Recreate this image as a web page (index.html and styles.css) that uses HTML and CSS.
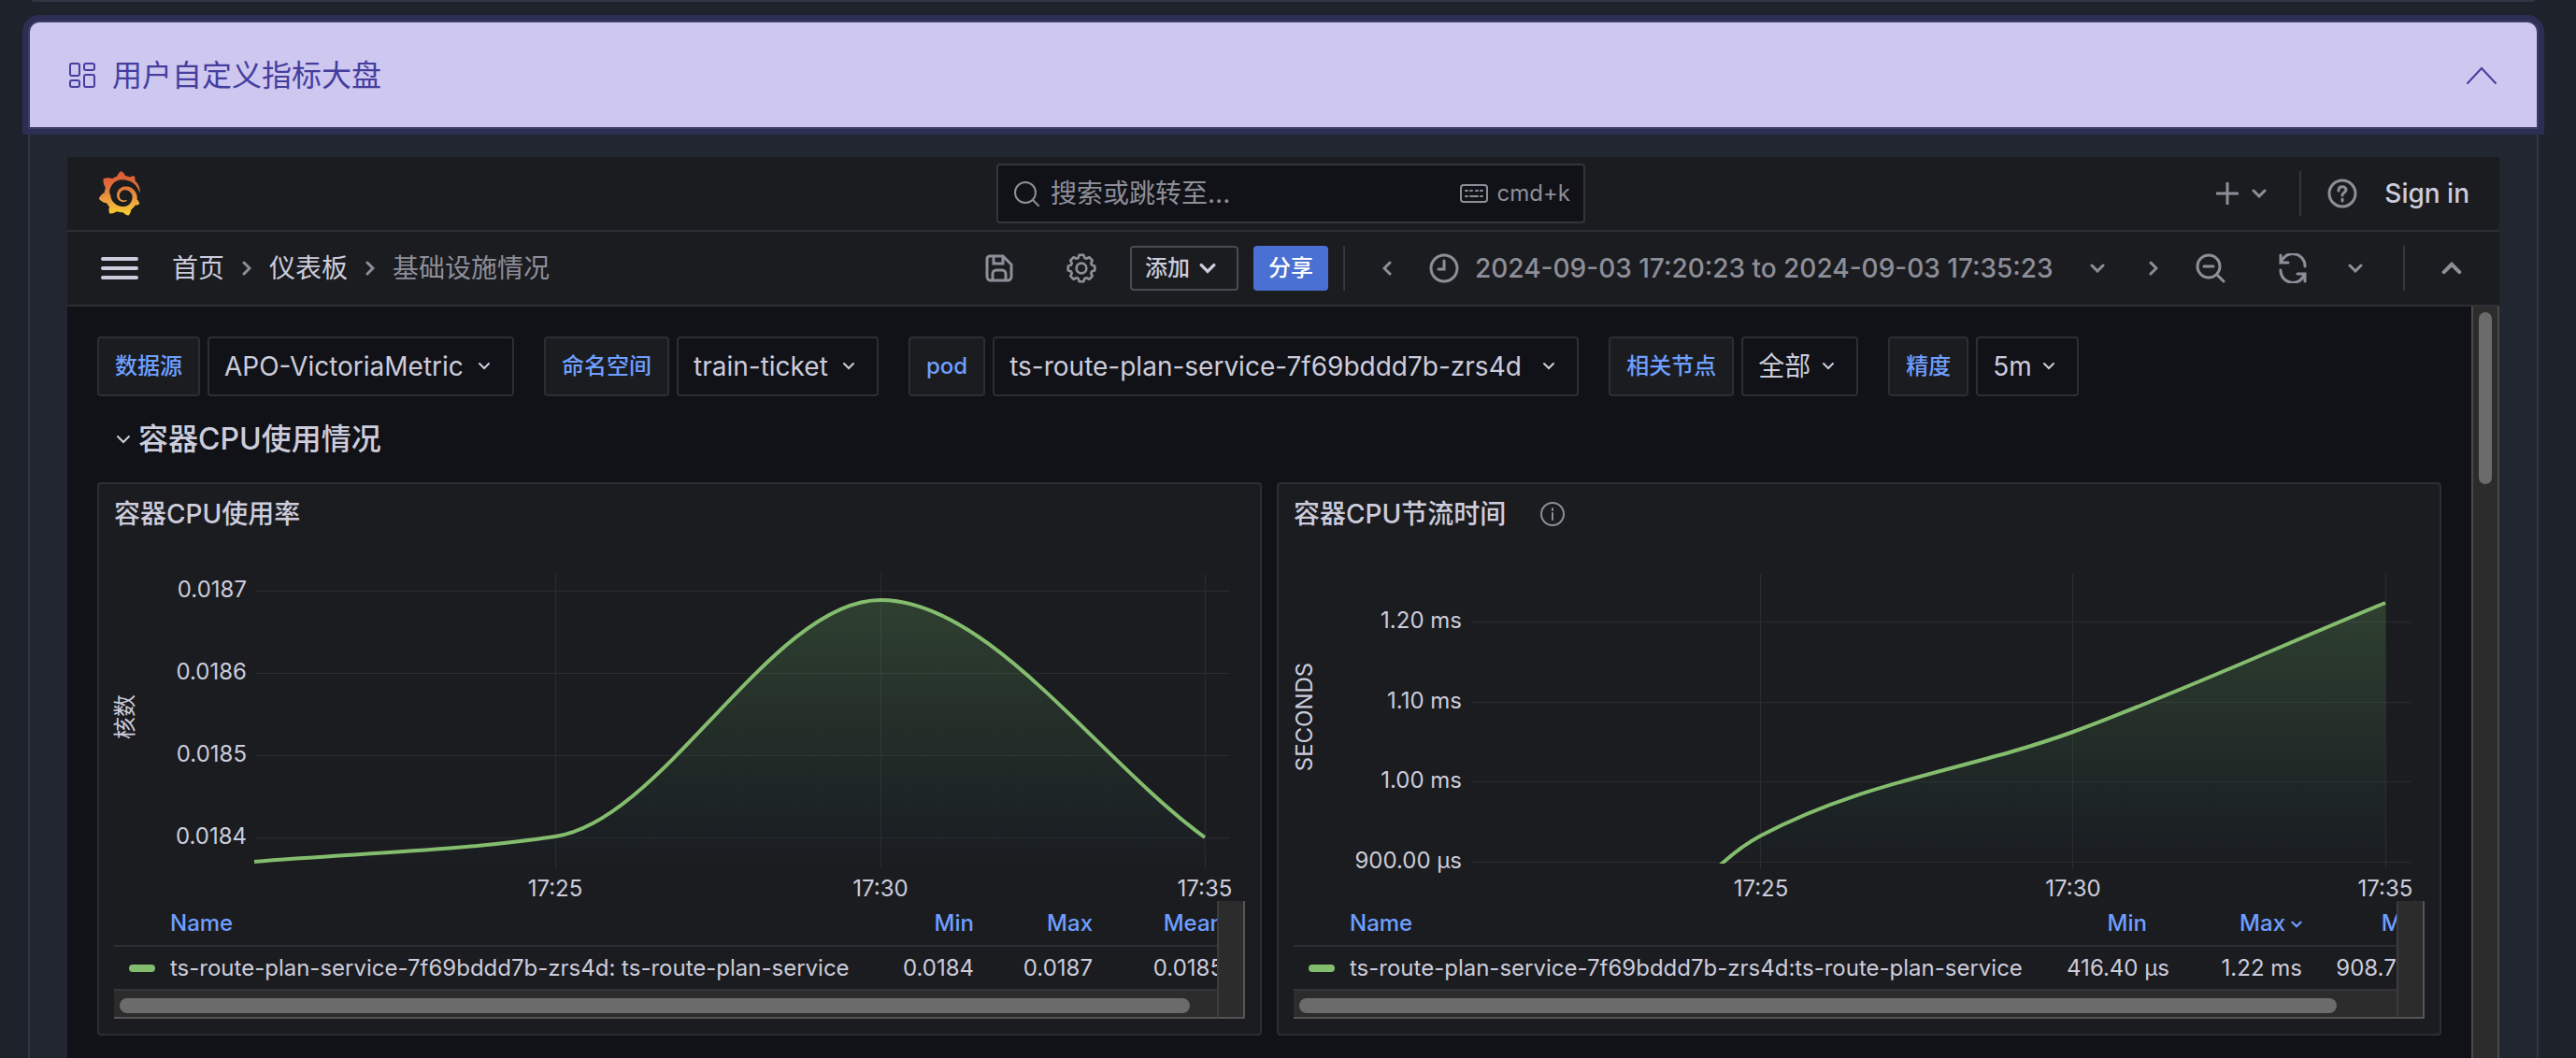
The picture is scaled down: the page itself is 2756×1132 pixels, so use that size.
FILE: index.html
```html
<!DOCTYPE html>
<html lang="zh-CN">
<head>
<meta charset="utf-8">
<title>用户自定义指标大盘</title>
<link rel="stylesheet" href="styles.css">
</head>
<body>
<svg class="sprite" aria-hidden="true">
  <symbol id="caret" viewBox="0 0 16 10"><path d="M2 2l6 6 6-6"/></symbol>
  <symbol id="angle" viewBox="0 0 10 16"><path d="M2 2l6 6-6 6"/></symbol>
</svg>
<main class="page">
  <div class="previous"></div>
  <section class="accordion">
    <h2 class="accordion-title">
      <button class="accordion-toggle" type="button" aria-expanded="true">
        <svg class="icon-grid" viewBox="0 0 28 28"><rect x="1" y="1" width="10" height="13" rx="2"/><rect x="16" y="1" width="11" height="7" rx="2"/><rect x="1" y="19" width="10" height="7" rx="2"/><rect x="16" y="13" width="11" height="13" rx="2"/></svg>
        <span>用户自定义指标大盘</span>
        <svg class="icon-fold" viewBox="0 0 34 20"><path d="M2 18L17 2l15 16"/></svg>
      </button>
    </h2>
    <div class="grafana">
      <header class="topbar">
        <a class="logo" href="#" aria-label="Grafana">
          <svg viewBox="0 0 86 93">
            <defs><linearGradient id="flame" x1="0" y1="1" x2="0" y2="0"><stop offset="0" stop-color="#f9d22c"/><stop offset=".3" stop-color="#eda63f"/><stop offset=".7" stop-color="#e0693a"/><stop offset="1" stop-color="#dc5a34"/></linearGradient></defs>
            <path fill="url(#flame)" d="M85.01,40.8c-0.14-1.55-0.41-3.35-0.93-5.32c-0.51-1.97-1.28-4.13-2.39-6.37c-1.12-2.24-2.57-4.57-4.47-6.82c-0.74-0.88-1.54-1.76-2.42-2.6c1.3-5.17-1.59-9.65-1.59-9.65c-4.98-0.31-8.14,1.54-9.31,2.39c-0.2-0.08-0.39-0.17-0.59-0.25c-0.85-0.34-1.72-0.66-2.61-0.95c-0.89-0.28-1.81-0.54-2.74-0.76c-0.94-0.22-1.89-0.4-2.86-0.55c-0.17-0.03-0.34-0.05-0.51-0.07C52.45,2.89,46.21,0,46.21,0c-6.95,4.41-8.27,10.57-8.27,10.57s-0.03,0.14-0.07,0.36c-0.38,0.11-0.77,0.22-1.15,0.34c-0.53,0.16-1.06,0.36-1.59,0.55c-0.53,0.21-1.06,0.41-1.58,0.64c-1.05,0.45-2.09,0.96-3.1,1.53c-0.99,0.55-1.95,1.16-2.9,1.82c-0.14-0.06-0.24-0.11-0.24-0.11c-9.62-3.68-18.17,0.75-18.17,0.75c-0.78,10.24,3.84,16.68,4.76,17.86c-0.23,0.63-0.44,1.28-0.64,1.93c-0.71,2.32-1.25,4.7-1.55,7.1c-0.04,0.34-0.09,0.68-0.12,1.03C2.68,48.76,0.06,57.4,0.06,57.4c7.42,8.53,16.08,9.06,16.08,9.06c1.1,1.96,2.37,3.83,3.82,5.56c0.6,0.73,1.23,1.43,1.88,2.1c-2.71,7.74,0.38,14.18,0.38,14.18c8.26,0.31,13.69-3.61,14.83-4.52c0.82,0.28,1.66,0.53,2.5,0.74c2.54,0.65,5.14,1.04,7.74,1.15c0.65,0.03,1.3,0.04,1.95,0.04l1.35-0.04c3.89,5.55,10.74,6.34,10.74,6.34c4.87-5.13,5.15-10.22,5.15-11.33l-0.01-0.45c1.02-0.72,2-1.49,2.92-2.31c1.95-1.76,3.65-3.77,5.06-5.93c0.13-0.2,0.26-0.41,0.39-0.62c5.51,0.32,9.39-3.41,9.39-3.41c-0.91-5.74-4.18-8.54-4.87-9.07c-0.07-0.05-0.15-0.1-0.25-0.17c0.03-0.35,0.06-0.69,0.08-1.04c0.04-0.62,0.06-1.24,0.06-1.85l0-0.97l-0.05-0.9c-0.01-0.18-0.02-0.34-0.04-0.5l-0.11-0.96l-0.07-0.47c-0.1-0.63-0.22-1.26-0.36-1.88c-0.58-2.47-1.54-4.82-2.82-6.93c-1.28-2.11-2.86-3.98-4.65-5.56c-1.79-1.58-3.79-2.85-5.9-3.79c-2.11-0.95-4.33-1.55-6.54-1.83c-1.11-0.14-2.21-0.2-3.3-0.19l-0.82,0.02l-0.4,0.03c-0.15,0.01-0.31,0.02-0.45,0.04c-0.56,0.05-1.11,0.13-1.66,0.23c-2.18,0.41-4.24,1.2-6.06,2.28c-1.82,1.09-3.39,2.45-4.68,3.98c-1.28,1.54-2.28,3.24-2.96,5c-0.69,1.76-1.07,3.58-1.18,5.35c-0.03,0.44-0.04,0.88-0.03,1.32l0.02,0.68c0.02,0.21,0.03,0.42,0.05,0.63c0.09,0.9,0.25,1.75,0.49,2.58c0.48,1.66,1.25,3.15,2.2,4.43c0.95,1.28,2.08,2.33,3.28,3.15c1.2,0.82,2.49,1.41,3.76,1.79c1.27,0.38,2.54,0.54,3.74,0.53c1.5,0,3-0.3,4.05-0.6c1-0.4,1.9-0.9,2.9-1.6c0.42-0.33,0.48-0.94,0.15-1.35c-0.29-0.36-0.79-0.45-1.19-0.23c-1.2,0.6-2.2,0.9-3.22,0.99c-1,0.05-2,0-2.44-0.1c-0.93-0.13-1.88-0.4-2.79-0.82c-0.91-0.41-1.79-0.98-2.57-1.69c-0.79-0.71-1.48-1.56-2.01-2.52c-0.54-0.96-0.92-2.03-1.09-3.16c-0.09-0.56-0.13-1.14-0.11-1.71c0.05-0.7,0.1-1.4,0.19-2c0.43-2.45,1.65-4.83,3.55-6.65c0.47-0.45,0.98-0.87,1.53-1.25c0.55-0.38,1.12-0.71,1.73-0.99c0.6-0.28,1.23-0.5,1.88-0.68c0.65-0.17,1.31-0.29,1.98-0.35c0.34-0.03,0.67-0.04,1.01-0.04l1.04,0.06c0.73,0.06,1.46,0.16,2.17,0.32c1.43,0.32,2.83,0.85,4.13,1.57c2.6,1.44,4.81,3.69,6.17,6.4c0.69,1.35,1.16,2.81,1.4,4.31c0.06,0.38,0.1,0.76,0.13,1.14l0.04,0.87c0.01,0.5,0,1-0.05,1.47c-0.03,0.42-0.07,0.83-0.12,1.24c-0.05,0.41-0.12,0.82-0.19,1.22c-0.08,0.4-0.17,0.81-0.27,1.21c-0.2,0.8-0.46,1.59-0.76,2.36c-0.61,1.54-1.42,3-2.4,4.36c-1.96,2.7-4.64,4.9-7.69,6.29c-1.52,0.69-3.13,1.19-4.78,1.47c-0.82,0.14-1.66,0.22-2.5,0.25l-1.26,0.01c-0.45-0.01-0.9-0.03-1.34-0.07c-1.79-0.13-3.55-0.45-5.27-0.95c-1.71-0.49-3.38-1.16-4.95-2c-3.14-1.68-5.95-3.98-8.15-6.76c-1.11-1.38-2.07-2.87-2.87-4.43c-0.79-1.56-1.42-3.2-1.89-4.88c-0.46-1.68-0.75-3.39-0.86-5.11C20.5,44 22,36 27,29C33,21 41,18 49,18C65,18 79,27 85,46C85.2,44 85.1,42.3 85.01,40.8Z"/>
          </svg>
        </a>
        <label class="search">
          <svg class="i28" viewBox="0 0 28 28"><circle cx="13" cy="13" r="11"/><path d="M21 21l6 6"/></svg>
          <input type="text" placeholder="搜索或跳转至..." aria-label="搜索">
          <svg class="icon-kbd" viewBox="0 0 30 20"><rect x="1" y="1" width="28" height="18" rx="3"/><path d="M6 7h2m3 0h2m4 0h2m3 0h2M6 13h2m3 0h8m3 0h2"/></svg>
          <span class="hint">cmd+k</span>
        </label>
        <div class="account">
          <button class="plus" type="button" aria-label="新建">
            <svg class="icon-plus" viewBox="0 0 24 24"><path d="M12 1v22M1 12h22"/></svg>
            <svg class="caret"><use href="#caret"/></svg>
          </button>
          <span class="divider"></span>
          <button type="button" aria-label="帮助"><svg class="i32" viewBox="0 0 32 32"><circle cx="16" cy="16" r="14"/><path d="M12 13c0-6 8-5 8-1 0 3-4 3-4 6M16 22v2"/></svg></button>
          <a class="signin" href="#">Sign in</a>
        </div>
      </header>
      <div class="toolbar">
        <button class="menu" type="button" aria-label="菜单"><svg viewBox="0 0 40 26"><path d="M2 3h36M2 13h36M2 23h36"/></svg></button>
        <nav class="crumbs">
          <a href="#">首页</a>
          <svg class="angle"><use href="#angle"/></svg>
          <a href="#">仪表板</a>
          <svg class="angle"><use href="#angle"/></svg>
          <span>基础设施情况</span>
        </nav>
        <div class="tools">
          <button class="save" type="button" aria-label="保存"><svg class="i32" viewBox="0 0 32 32"><path d="M6 3h14l9 9v13a4 4 0 0 1-4 4H7a4 4 0 0 1-4-4V6a3 3 0 0 1 3-3zM10 3v8h10V3M9 29v-7a4 4 0 0 1 4-4h6a4 4 0 0 1 4 4v7"/></svg></button>
          <button class="gear" type="button" aria-label="设置"><svg class="i32" viewBox="-12 -12 24 24"><path stroke-width="2" stroke-linejoin="round" d="M-1.700-10.700H1.700L2.600-8.300 4-7.700 6.300-8.800 8.800-6.300 7.700-4 8.300-2.600 10.700-1.700V1.700L8.300 2.600 7.700 4 8.800 6.300 6.300 8.800 4 7.700 2.600 8.300 1.700 10.700H-1.700L-2.600 8.300-4 7.700-6.300 8.800-8.800 6.300-7.700 4-8.300 2.600-10.700 1.700V-1.700L-8.300-2.600-7.700-4-8.800-6.300-6.300-8.800-4-7.700-2.600-8.300z"/><circle stroke-width="2" r="4"/></svg></button>
          <button class="add" type="button">添加<svg class="caret caret-bold"><use href="#caret"/></svg></button>
          <button class="share" type="button">分享</button>
          <span class="divider"></span>
          <button class="back" type="button" aria-label="后退"><svg class="angle flip"><use href="#angle"/></svg></button>
          <button class="range" type="button">
            <svg class="i32" viewBox="0 0 32 32"><circle cx="16" cy="16" r="14"/><path d="M16 8v9h-6"/></svg>
            <span class="range-text">2024-09-03 17:20:23 to 2024-09-03 17:35:23</span>
            <svg class="caret"><use href="#caret"/></svg>
          </button>
          <button class="forward" type="button" aria-label="前进"><svg class="angle"><use href="#angle"/></svg></button>
          <button class="zoom" type="button" aria-label="缩小"><svg class="i32" viewBox="0 0 32 32"><circle cx="14" cy="14" r="12"/><path d="M23 23l7 7M9 14h10"/></svg></button>
          <button class="reload" type="button" aria-label="刷新"><svg class="i32" viewBox="0 0 32 32"><path d="M3 2v8h8M3.500 10A13 13 0 0 1 29 14M29 30v-8h-8M28.500 22A13 13 0 0 1 3 18"/></svg></button>
          <button class="every" type="button" aria-label="刷新间隔"><svg class="caret"><use href="#caret"/></svg></button>
          <span class="divider"></span>
          <button class="collapse" type="button" aria-label="收起"><svg class="caret-up"><use href="#caret"/></svg></button>
        </div>
      </div>
      <div class="viewport">
        <div class="dash">
          <form class="vars">
            <div class="var"><label for="ds">数据源</label><select id="ds" class="var-medium"><option>APO-VictoriaMetric</option></select></div>
            <div class="var"><label for="ns">命名空间</label><select id="ns" class="var-small"><option>train-ticket</option></select></div>
            <div class="var"><label for="pod">pod</label><select id="pod" class="var-large"><option>ts-route-plan-service-7f69bddd7b-zrs4d</option></select></div>
            <div class="var"><label for="node">相关节点</label><select id="node"><option>全部</option></select></div>
            <div class="var"><label for="step">精度</label><select id="step"><option>5m</option></select></div>
          </form>
          <h3 class="row-title"><button type="button"><svg class="caret"><use href="#caret"/></svg>容器CPU使用情况</button></h3>
          <div class="panels">
            <section class="panel">
              <h4>容器CPU使用率</h4>
              <svg class="chart" viewBox="0 0 1210 382">
                <defs><linearGradient id="fillA" gradientUnits="userSpaceOnUse" x1="0" y1="60" x2="0" y2="342"><stop offset="0" stop-color="#73bf69" stop-opacity=".22"/><stop offset=".9" stop-color="#1a3030" stop-opacity=".2"/><stop offset="1" stop-color="#1a3030" stop-opacity="0"/></linearGradient></defs>
                <path class="gridline" d="M152 50.500h1042M152 138.500h1042M152 226.500h1042M152 314.500h1042M472.500 32v316M820.500 32v316M1167.500 32v316"/>
                <path fill="url(#fillA)" d="M150 340C257 331 365 329 472 313 588 296 704 60 820 60 936 60 1051 229 1167 314V342H150z"/>
                <path class="line" d="M150 340C257 331 365 329 472 313 588 296 704 60 820 60 936 60 1051 229 1167 314"/>
                <g class="ylabels"><text x="142" y="57">0.0187</text><text x="142" y="145">0.0186</text><text x="142" y="233">0.0185</text><text x="142" y="321">0.0184</text></g>
                <g class="xlabels"><text x="472" y="377">17:25</text><text x="820" y="377">17:30</text><text x="1167" y="377">17:35</text></g>
                <text class="axis" transform="translate(20 185) rotate(-90)">核数</text>
              </svg>
              <div class="legend">
                <div class="legend-clip">
                  <table class="legend-a">
                    <colgroup><col class="c-swatch"><col class="c-name"><col class="c-min"><col class="c-max"><col class="c-mean"></colgroup>
                    <thead><tr><th></th><th class="name">Name</th><th>Min</th><th>Max</th><th>Mean</th></tr></thead>
                    <tbody><tr><td><i class="swatch"></i></td><td class="name">ts-route-plan-service-7f69bddd7b-zrs4d: ts-route-plan-service</td><td>0.0184</td><td>0.0187</td><td>0.0185</td></tr></tbody>
                  </table>
                </div>
                <div class="vbar"></div>
                <div class="hbar"><div class="thumb"></div></div>
              </div>
            </section>
            <section class="panel">
              <h4>容器CPU节流时间 <svg class="icon-info" viewBox="0 0 28 28"><circle cx="14" cy="14" r="12"/><path d="M14 13v7M14 8v2"/></svg></h4>
              <svg class="chart" viewBox="0 0 1210 382">
                <defs><linearGradient id="fillB" gradientUnits="userSpaceOnUse" x1="0" y1="63" x2="0" y2="342"><stop offset="0" stop-color="#73bf69" stop-opacity=".22"/><stop offset=".9" stop-color="#1a3030" stop-opacity=".2"/><stop offset="1" stop-color="#1a3030" stop-opacity="0"/></linearGradient>
                <clipPath id="plotB"><rect x="190" y="30" width="1010" height="312"/></clipPath></defs>
                <path class="gridline" d="M191 83.500h1004M191 169.500h1004M191 254.500h1004M191 340.500h1004M499.500 32v316M833.500 32v316M1168.500 32v316"/>
                <g clip-path="url(#plotB)">
                  <path fill="url(#fillB)" d="M166 755C277 607 388 371 500 312 611 253 722 242 834 201 945 160 1056 109 1168 63V342H166z"/>
                  <path class="line" d="M166 755C277 607 388 371 500 312 611 253 722 242 834 201 945 160 1056 109 1168 63"/>
                </g>
                <g class="ylabels"><text x="180" y="90">1.20 ms</text><text x="180" y="176">1.10 ms</text><text x="180" y="261">1.00 ms</text><text x="180" y="347">900.00 µs</text></g>
                <g class="xlabels"><text x="500" y="377">17:25</text><text x="834" y="377">17:30</text><text x="1168" y="377">17:35</text></g>
                <text class="axis" transform="translate(20 185) rotate(-90)">SECONDS</text>
              </svg>
              <div class="legend">
                <div class="legend-clip">
                  <table class="legend-b">
                    <colgroup><col class="c-swatch"><col class="c-name"><col class="c-min"><col class="c-max"><col class="c-mean"></colgroup>
                    <thead><tr><th></th><th class="name">Name</th><th class="sortable">Min</th><th>Max<svg class="sort"><use href="#caret"/></svg></th><th>Mean</th></tr></thead>
                    <tbody><tr><td><i class="swatch"></i></td><td class="name">ts-route-plan-service-7f69bddd7b-zrs4d:ts-route-plan-service</td><td>416.40 µs</td><td>1.22 ms</td><td>908.70 µs</td></tr></tbody>
                  </table>
                </div>
                <div class="vbar"></div>
                <div class="hbar"><div class="thumb thumb-b"></div></div>
              </div>
            </section>
          </div>
        </div>
        <div class="scroll"><div class="scroll-thumb"></div></div>
      </div>
    </div>
  </section>
</main>
</body>
</html>
```
FILE: styles.css
```css
* { box-sizing: border-box; }

body {
  margin: 0;
  background: #1d222b;
  color: #ccccdc;
  font: 400 28px/40px Inter, "Noto Sans CJK SC", sans-serif;
}

.sprite { position: absolute; width: 0; height: 0; }

svg { flex: none; fill: none; stroke: currentColor; stroke-width: 3; stroke-linecap: round; }
.logo svg { stroke: none; }

button {
  display: flex;
  align-items: center;
  margin: 0;
  padding: 0;
  border: 0;
  background: none;
  color: #8e8e99;
  font: inherit;
}
a { color: inherit; text-decoration: none; }
h2, h3, h4 { margin: 0; font-weight: inherit; font-size: inherit; }

.page { display: flex; flex-direction: column; min-height: 100vh; padding: 0 40px 0 30px; overflow: hidden; }
.previous { height: 2px; margin: 0 4px; background: #323644; border-radius: 0 0 2px 2px; }

/* accordion */
.accordion {
  display: flex;
  flex-direction: column;
  flex: 1;
  margin-top: 20px;
  border: 2px solid #323644;
  border-bottom: 0;
  border-radius: 12px 12px 0 0;
  background: #212631;
}
.accordion-toggle {
  width: 100%;
  height: 112px;
  padding: 2px 42px 0;
  gap: 18px;
  border-radius: 10px 10px 0 0;
  background: #cec7ef;
  box-shadow: 0 0 0 2px #3a3d66, 0 0 0 8px #2d2e54;
  color: #453e9e;
  font-size: 32px;
}
.icon-grid { width: 28px; height: 28px; stroke-width: 2; }
.icon-fold { width: 34px; height: 20px; margin-left: auto; stroke-width: 2; }

/* embedded dashboard */
.grafana { display: flex; flex-direction: column; flex: 1; margin: 32px 40px 0; background: #111217; }
.topbar, .toolbar { height: 80px; background: #1b1c20; border-bottom: 2px solid #2e2f34; }
.topbar {
  display: grid;
  grid-template-columns: 1fr 630px 1fr;
  align-items: center;
  padding: 0 16px 0 32px;
}
.logo { display: flex; padding-left: 1px; }
.logo svg { width: 46px; height: 48px; }
.search {
  display: flex;
  align-items: center;
  height: 64px;
  padding: 0 14px 0 16px;
  border: 2px solid #34353b;
  border-radius: 4px;
  background: #111217;
  color: #8e8e99;
}
.search input { flex: 1; min-width: 0; padding: 0 12px; border: 0; background: none; color: inherit; font: inherit; }
.search input::placeholder { color: inherit; opacity: 1; }
.i28 { width: 28px; height: 28px; stroke-width: 2; }
.i32 { width: 32px; height: 32px; }
.icon-kbd { width: 30px; height: 20px; margin-right: 10px; stroke-width: 2; }
.hint { font-size: 24px; }
.divider { width: 2px; height: 48px; background: #35363b; }
.caret { width: 16px; height: 10px; }
.caret-up { width: 22px; height: 14px; transform: rotate(180deg); }
.angle { width: 10px; height: 16px; }
.flip { transform: rotate(180deg); }

.account { display: flex; align-items: center; justify-content: flex-end; }
.account .divider { margin: 0 28px 0 35px; }
.plus { gap: 14px; }
.icon-plus { width: 24px; height: 24px; }
.signin { padding: 0 16px 0 29px; font-weight: 500; }

.toolbar { display: flex; align-items: center; padding: 0 40px 0 36px; }
.menu { color: #ccccdc; }
.menu svg { width: 40px; height: 26px; stroke-width: 4; }
.crumbs { display: flex; align-items: center; gap: 19px; margin-left: 36px; color: #8e8e99; }
.crumbs a { color: #ccccdc; }
.tools { display: flex; align-items: center; margin-left: auto; font-weight: 500; }
.gear { margin: 0 36px 0 56px; }
.add {
  height: 48px;
  padding: 0 22px 0 14px;
  gap: 10px;
  border: 2px solid #4a4b52;
  border-radius: 4px;
  color: #ccccdc;
  font-size: 24px;
}
.caret-bold { width: 18px; height: 12px; }
.share { height: 48px; margin: 0 16px; padding: 0 16px; border-radius: 4px; background: #4970d2; color: #fff; font-size: 24px; }
.back { margin: 0 40px; }
.range { gap: 17px; }
.range-text { min-width: 629px; text-align: left; }
.range .caret { margin-left: 12px; }
.forward { margin: 0 40px 0 47px; }
.zoom { margin-right: 56px; }
.every { margin: 0 43px; }
.collapse { margin-left: 39px; }

.viewport { display: flex; flex: 1; }
.dash { flex: 1; min-width: 0; padding: 32px 32px 24px; }
.scroll {
  width: 30px;
  padding: 6px;
  border: solid #4a4a4a;
  border-width: 0 2px;
  background: #2c2c2c;
}
.scroll-thumb { height: 184px; border-radius: 8px; background: #6b6b6b; }

/* variables */
.vars { display: flex; gap: 32px; }
.var { display: flex; gap: 8px; }
.var label, .var select {
  height: 64px;
  border: 2px solid #2d2e34;
  border-radius: 4px;
}
.var label { padding: 10px 17px; background: #1b1c20; color: #6e9fff; font-size: 24px; font-weight: 500; }
.var select {
  appearance: none;
  padding: 0 48px 0 16px;
  background: #111217 url("data:image/svg+xml,%3Csvg xmlns='http://www.w3.org/2000/svg' width='16' height='10' fill='none' stroke='%23ccccdc' stroke-width='2' stroke-linecap='round'%3E%3Cpath d='M3 2l5 5 5-5'/%3E%3C/svg%3E") no-repeat right 22px center;
  color: #ccccdc;
  font: inherit;
}
.var-small { min-width: 216px; }
.var-medium { min-width: 328px; }
.var-large { min-width: 627px; }

.row-title { padding: 22px 20px; font-size: 32px; font-weight: 500; }
.row-title button { gap: 8px; height: 48px; color: #ccccdc; }
.row-title .caret { stroke-width: 2; }

/* panels */
.panels { display: grid; grid-template-columns: 1fr 1fr; gap: 16px; }
.panel { min-width: 0; padding: 0 16px 16px; border: 2px solid #2d2e34; border-radius: 4px; background: #1b1c20; }
.panel h4 { display: flex; align-items: center; gap: 36px; height: 64px; font-weight: 500; }
.icon-info { width: 28px; height: 28px; color: #8e8e99; stroke-width: 2; }
.chart { display: block; width: 100%; height: auto; overflow: visible; }
.chart text { fill: #ccccdc; stroke: none; font-size: 24px; }
.chart path { stroke: none; }
.chart .gridline { stroke: #2b2c31; stroke-width: 1; stroke-linecap: butt; }
.chart .line { stroke: #84bd6e; stroke-width: 4; stroke-linecap: butt; }
.ylabels { text-anchor: end; }
.xlabels, .axis { text-anchor: middle; }

.legend { display: grid; grid-template-columns: 1fr 30px; }
.legend-clip { min-width: 0; height: 96px; overflow: hidden; border-bottom: 2px solid #34353b; }
.legend table { table-layout: fixed; border-collapse: collapse; font-size: 24px; line-height: 32px; white-space: nowrap; }
.legend-a { width: 1203px; }
.legend-b { width: 1244px; }
.c-swatch { width: 60px; }
.legend-a .c-min, .legend-a .c-max { width: 127px; }
.legend-a .c-mean { width: 140px; }
.legend-b .c-min, .legend-b .c-max { width: 142px; }
.legend-b .c-mean { width: 149px; }
.legend th { height: 48px; padding: 0 16px 0 0; border-bottom: 2px solid #2e2f34; color: #6e9fff; font-weight: 500; text-align: right; }
.legend td { height: 46px; padding: 0 16px 0 0; text-align: right; }
.legend .name { padding: 0; text-align: left; }
.legend .sortable { padding-right: 40px; }
.sort { width: 12px; height: 8px; margin-left: 6px; vertical-align: middle; }
.swatch { display: block; width: 28px; height: 8px; margin-left: 16px; border-radius: 4px; background: #84bd6e; }
.vbar { grid-row: 1 / 3; grid-column: 2; background: #2c2c2c; border: 2px solid #555; border-width: 0 2px 2px; border-left-color: #3c3c3c; }
.hbar { height: 30px; padding: 8px 6px; background: #2c2c2c; border-bottom: 2px solid #555; }
.thumb { width: 98%; height: 16px; border-radius: 8px; background: #6b6b6b; }
.thumb-b { width: 95%; }
```
